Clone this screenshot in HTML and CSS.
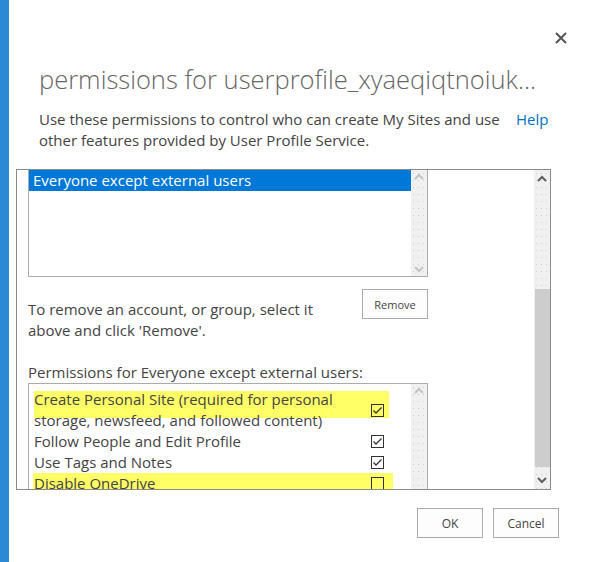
FILE: index.html
```html
<!DOCTYPE html>
<html lang="en">
<head>
  <meta charset="UTF-8">
  <title>permissions for userprofile</title>
  <link rel="stylesheet" href="styles.css">
</head>
<body>
  <div class="page">
    <div class="accent"></div>
    <div class="dialog">
      <div class="top">
        <button class="close" aria-label="Close">
          <svg width="12" height="12" viewBox="0 0 12 12"><path d="M1 1L11 11M11 1L1 11" stroke="#555" stroke-width="2"/></svg>
        </button>
      </div>
      <h1 class="title">permissions for userprofile_xyaeqiqtnoiuk...</h1>
      <div class="intro">
        <p>Use these permissions to control who can create My Sites and use other features provided by User Profile Service.</p>
        <a href="#" class="help">Help</a>
      </div>

      <div class="frame">
        <div class="frame-body">
          <div class="listbox users">
            <div class="list-items">
              <div class="item selected">Everyone except external users</div>
            </div>
            <div class="scrollbar light">
              <svg class="arrow" width="16" height="14" viewBox="0 0 16 14"><path d="M4 9L8 5L12 9" fill="none" stroke="currentColor" stroke-width="2"/></svg>
              <div class="track"></div>
              <svg class="arrow" width="16" height="14" viewBox="0 0 16 14"><path d="M4 5L8 9L12 5" fill="none" stroke="currentColor" stroke-width="2"/></svg>
            </div>
          </div>

          <div class="remove-row">
            <p>To remove an account, or group, select it above and click 'Remove'.</p>
            <button class="btn small">Remove</button>
          </div>

          <div class="perm-label">Permissions for Everyone except external users:</div>
          <div class="listbox perms">
            <div class="list-items">
              <div class="perm two-line">
                <span class="mark mark-1"></span>
                <span class="perm-text">Create Personal Site (required for personal storage, newsfeed, and followed content)</span>
                <span class="check"><svg width="11" height="11" viewBox="0 0 11 11"><path d="M1.5 5.5L4 8L9.5 2.5" fill="none" stroke="#333" stroke-width="1.3"/></svg></span>
              </div>
              <div class="perm">
                <span class="perm-text">Follow People and Edit Profile</span>
                <span class="check"><svg width="11" height="11" viewBox="0 0 11 11"><path d="M1.5 5.5L4 8L9.5 2.5" fill="none" stroke="#333" stroke-width="1.3"/></svg></span>
              </div>
              <div class="perm">
                <span class="perm-text">Use Tags and Notes</span>
                <span class="check"><svg width="11" height="11" viewBox="0 0 11 11"><path d="M1.5 5.5L4 8L9.5 2.5" fill="none" stroke="#333" stroke-width="1.3"/></svg></span>
              </div>
              <div class="perm">
                <span class="mark mark-2"></span>
                <span class="perm-text">Disable OneDrive</span>
                <span class="check"></span>
              </div>
            </div>
            <div class="scrollbar light">
              <svg class="arrow" width="16" height="14" viewBox="0 0 16 14"><path d="M4 9L8 5L12 9" fill="none" stroke="currentColor" stroke-width="2"/></svg>
              <div class="track"></div>
            </div>
          </div>
        </div>
        <div class="scrollbar dark">
          <svg class="arrow" width="16" height="18" viewBox="0 0 16 18"><path d="M4 11L8 7L12 11" fill="none" stroke="currentColor" stroke-width="2"/></svg>
          <div class="track"><div class="thumb"></div></div>
          <svg class="arrow" width="16" height="18" viewBox="0 0 16 18"><path d="M4 7L8 11L12 7" fill="none" stroke="currentColor" stroke-width="2"/></svg>
        </div>
      </div>

      <div class="actions">
        <button class="btn">OK</button>
        <button class="btn">Cancel</button>
      </div>
    </div>
  </div>
</body>
</html>
```

FILE: styles.css
```css
:root {
  --accent: #2b8ad6;
  --text: #444;
  --border: #ababab;
  --select: #0078d7;
  --mark: #ffff66;
  --track: #f0f0f0;
}

body {
  margin: 0;
  font-family: "Open Sans", "Noto Sans", sans-serif;
  color: var(--text);
  background: #fff;
}
.page {
  display: flex;
  height: 562px;
  overflow: hidden;
}
.accent {
  width: 9px;
  background: var(--accent);
  flex-shrink: 0;
}
.dialog {
  flex: 1;
  padding: 0 39px 0 7px;
}
.top {
  display: flex;
  justify-content: flex-end;
  padding-top: 31px;
  margin-right: -9px;
}
.close {
  border: 0;
  background: none;
  padding: 0;
  width: 14px;
  height: 14px;
  display: flex;
  align-items: center;
  justify-content: center;
}
.title {
  margin: 16px 0 0 23px;
  font-size: 25.5px;
  font-weight: 300;
  color: #666;
  line-height: 36px;
  white-space: nowrap;
}
.intro {
  display: flex;
  align-items: flex-start;
  margin: 12px 0 0 23px;
  font-size: 15px;
  line-height: 21px;
}
.intro p {
  margin: 0;
  width: 470px;
}
.help {
  margin-left: 7px;
  color: #0072c6;
  text-decoration: none;
}

.frame {
  display: flex;
  margin-top: 18px;
  width: 535px;
  height: 321px;
  box-sizing: border-box;
  border: 1px solid #8a8a8a;
  overflow: hidden;
}
.frame-body {
  flex: 1;
  padding: 0 0 0 11px;
}
.listbox {
  display: flex;
  width: 400px;
  box-sizing: border-box;
  border: 1px solid var(--border);
  background: #fff;
}
.list-items {
  flex: 1;
}
.users {
  height: 107px;
  border-top: 0;
}
.item {
  font-size: 15px;
  line-height: 21px;
  padding: 0 4px;
}
.item.selected {
  background: var(--select);
  color: #fff;
}

.scrollbar {
  width: 16px;
  display: flex;
  flex-direction: column;
  background: var(--track);
  background-image: radial-gradient(circle, #d0d0d0 0.6px, transparent 0.8px);
  background-size: 5px 7px;
}
.scrollbar.light {
  color: #c4c4c4;
}
.scrollbar.dark {
  color: #5f5f5f;
}
.scrollbar .arrow {
  flex-shrink: 0;
  display: block;
}
.scrollbar .track {
  flex: 1;
  position: relative;
}
.thumb {
  position: absolute;
  left: 1px;
  right: 0;
  top: 101px;
  height: 178px;
  background: #cdcdcd;
}

.remove-row {
  display: flex;
  justify-content: space-between;
  align-items: flex-start;
  width: 400px;
  margin-top: 12px;
}
.remove-row p {
  margin: 10px 0 0;
  width: 310px;
  font-size: 15px;
  line-height: 21px;
}
.btn {
  font-family: "Open Sans", "Noto Sans", sans-serif;
  font-size: 12px;
  color: var(--text);
  background: #fdfdfd;
  border: 1px solid var(--border);
  width: 66px;
  height: 30px;
  padding: 0;
}
.btn.small {
  font-size: 11px;
}
.perm-label {
  margin-top: 21px;
  font-size: 15px;
  line-height: 21px;
}
.perms {
  height: 140px;
}
.perms .list-items {
  padding: 5px 0 0 5px;
}
.perm {
  position: relative;
  display: flex;
  align-items: center;
  width: 350px;
  font-size: 15px;
  line-height: 21px;
}
.perm-text {
  position: relative;
  flex: 1;
}
.two-line .perm-text {
  width: 300px;
}
.mark {
  position: absolute;
  left: 0;
  background: var(--mark);
}
.mark-1 {
  top: 2px;
  height: 27px;
  width: 355px;
}
.mark-2 {
  top: 0;
  height: 24px;
  width: 360px;
  left: -1px;
}
.check {
  position: relative;
  display: flex;
  width: 13px;
  height: 13px;
  box-sizing: border-box;
  border: 1px solid #333;
  margin-left: 8px;
}
.check svg {
  display: block;
}

.actions {
  display: flex;
  justify-content: flex-end;
  gap: 10px;
  margin-top: 18px;
}
```
